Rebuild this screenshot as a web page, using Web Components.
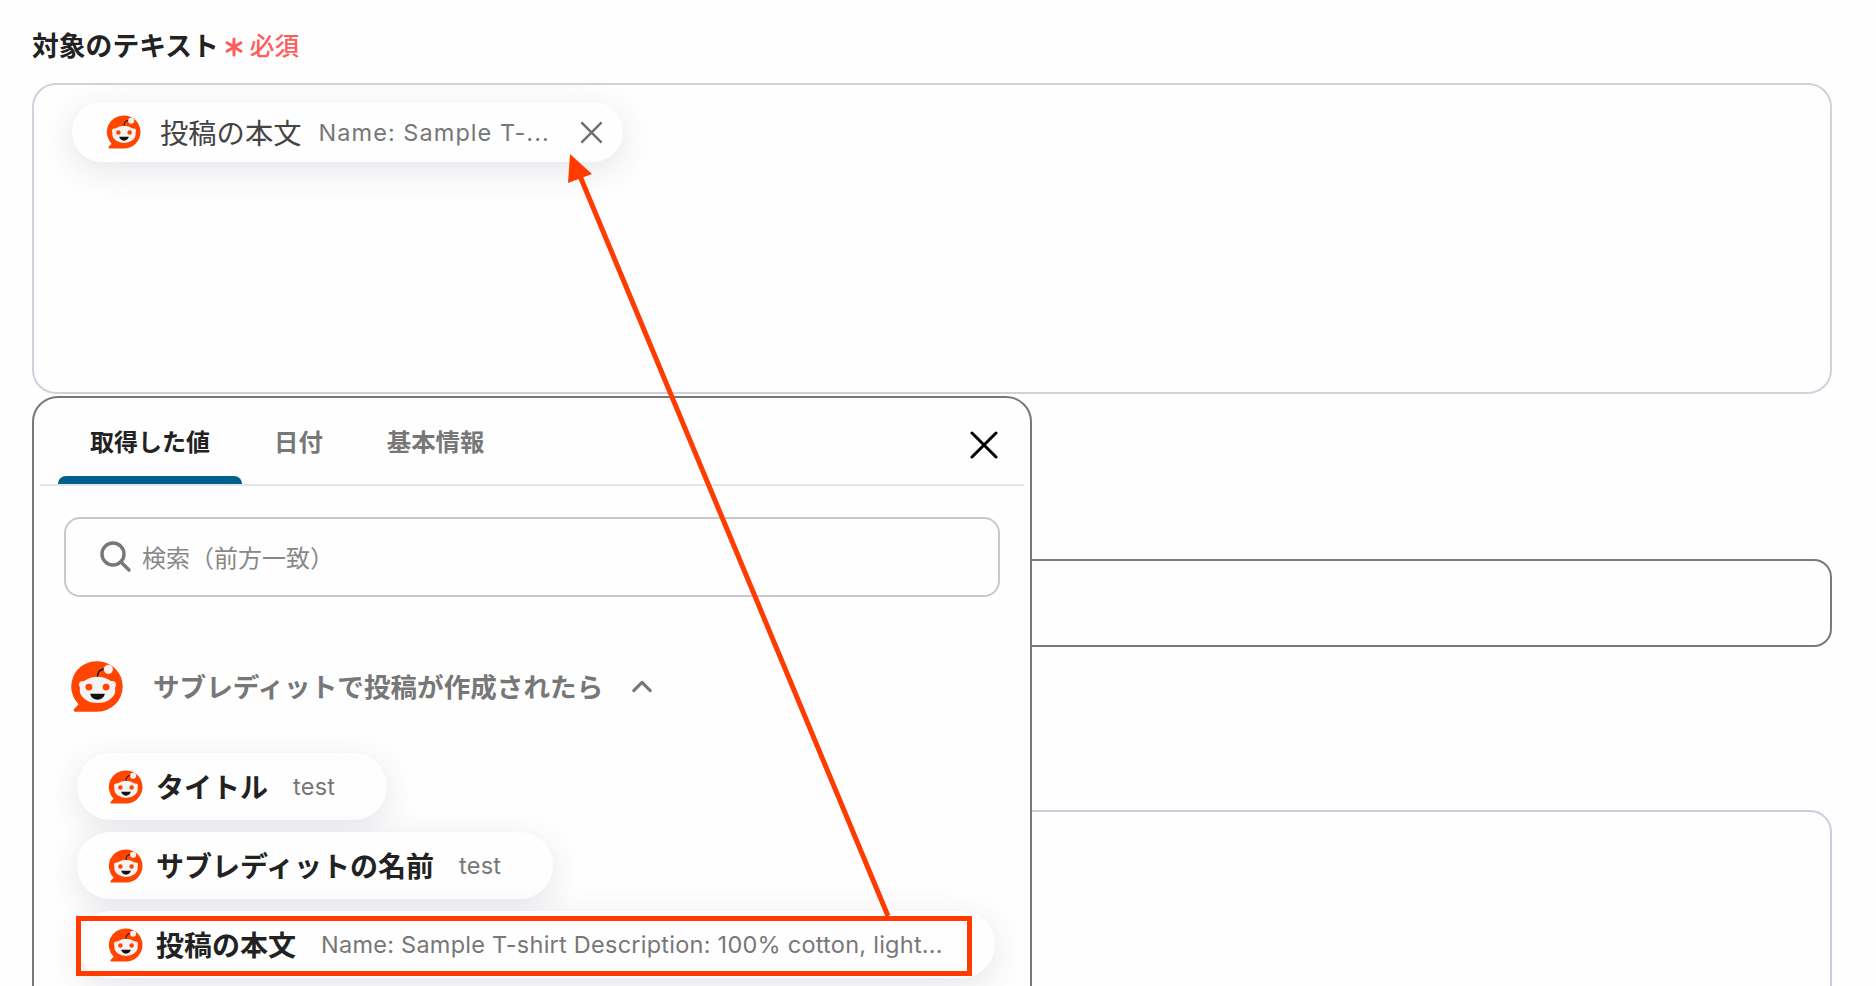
<!DOCTYPE html>
<html lang="ja">
<head>
<meta charset="utf-8">
<title>対象のテキスト</title>
<style>
  html, body { margin: 0; background: #fefefe; }
  body { font-family: 'Inter', 'Noto Sans CJK JP', sans-serif; }
</style>
</head>
<body>
<form-page>
  <field-label slot="label" required="必須">対象のテキスト</field-label>
  <field-box slot="first" height="311" radius="24" color="#cdd2dc">
    <token-chip name="投稿の本文" value="Name: Sample T-..." removable></token-chip>
  </field-box>
  <field-box slot="second" height="88" radius="18" color="#7a7a7a"></field-box>
  <field-box slot="third" height="400" radius="22" color="#c8cedc"></field-box>
  <picker-panel slot="panel">
    <token-chip name="タイトル" value="test" strong></token-chip>
    <token-chip name="サブレディットの名前" value="test" strong></token-chip>
    <token-chip name="投稿の本文" value="Name: Sample T-shirt Description: 100% cotton, light..." strong></token-chip>
  </picker-panel>
  <guide-overlay slot="overlay"></guide-overlay>
</form-page>

<script>
  // Icono de Reddit usado en los chips y en la cabecera del grupo
  class RedditIcon extends HTMLElement {
    constructor() {
      super();
      const size = this.getAttribute('size') || 36;
      this.attachShadow({ mode: 'open' }).innerHTML = `
        <style>
          :host { display: block; flex: none; width: ${size}px; height: ${size}px; }
          svg { display: block; width: 100%; height: 100%; }
        </style>
        <svg viewBox="0 0 48 48">
          <path fill="#ff4500" d="M24 2a22 22 0 0 1 0 44H4.6c-1.2 0-1.8-1.4-1-2.3l3.9-4.2A22 22 0 0 1 24 2z"/>
          <path fill="none" stroke="#1a1a1a" stroke-width="1.4" stroke-linecap="round" d="M24 15.5c0-4 2-6.4 6-6.8"/>
          <circle cx="33.5" cy="9" r="4" fill="#f4f1ef"/>
          <circle cx="11" cy="22.5" r="3.2" fill="#f4e9e4"/>
          <circle cx="37" cy="22.5" r="3.2" fill="#f4e9e4"/>
          <ellipse cx="24" cy="27" rx="15.5" ry="11.5" fill="#f6f3f2"/>
          <circle cx="16.5" cy="24.5" r="3" fill="#ff4500"/>
          <circle cx="31.5" cy="24.5" r="3" fill="#ff4500"/>
          <path fill="#111" d="M17.6 30.4h12.8c-.6 3-3.2 5.2-6.4 5.2s-5.8-2.2-6.4-5.2z"/>
        </svg>`;
    }
  }
  customElements.define('reddit-icon', RedditIcon);

  // Título del campo con la marca de obligatorio
  class FieldLabel extends HTMLElement {
    constructor() {
      super();
      const required = this.getAttribute('required');
      this.attachShadow({ mode: 'open' }).innerHTML = `
        <style>
          :host { display: flex; align-items: center; height: 38px; font-size: 26.8px; font-weight: 600; color: #222; }
          .req { display: flex; align-items: center; margin-left: 5px; color: #ff5c5c; font-size: 24.6px; font-weight: 500; }
          svg { width: 20px; height: 20px; margin: 6px 6px 0 0; }
        </style>
        <slot></slot>
        <span class="req">
          <svg viewBox="0 0 20 20" fill="none" stroke="#ff5c5c" stroke-width="3" stroke-linecap="round">
            <path d="M10 2v16M3 5.8l14 8.4M17 5.8L3 14.2"/>
          </svg>${required}
        </span>`;
    }
  }
  customElements.define('field-label', FieldLabel);

  // Caja de un campo del formulario
  class FieldBox extends HTMLElement {
    constructor() {
      super();
      const h = this.getAttribute('height');
      const r = this.getAttribute('radius');
      const c = this.getAttribute('color');
      this.attachShadow({ mode: 'open' }).innerHTML = `
        <style>
          :host {
            display: block; box-sizing: border-box; height: ${h}px; padding: 17px 38px;
            border: 2px solid ${c}; border-radius: ${r}px; background: #fefefe;
          }
        </style>
        <slot></slot>`;
    }
  }
  customElements.define('field-box', FieldBox);

  // Chip con el icono, el nombre del valor y su contenido
  class TokenChip extends HTMLElement {
    constructor() {
      super();
      const strong = this.hasAttribute('strong');
      const removable = this.hasAttribute('removable');
      this.attachShadow({ mode: 'open' }).innerHTML = `
        <style>
          :host {
            display: flex; align-items: center; box-sizing: border-box; width: max-content;
            height: ${strong ? 67 : 60}px; padding: 0 ${removable ? 20 : 52}px 0 ${strong ? 31 : 34}px;
            border-radius: 34px; background: #fefefe; box-shadow: 0 8px 32px rgba(60, 60, 90, .12);
          }
          .name {
            margin: 0 0 2px ${strong ? 12 : 18}px; font-size: ${strong ? 28 : 28.3}px; white-space: nowrap;
            font-weight: ${strong ? 700 : 400}; color: ${strong ? '#222' : '#444'};
          }
          .value {
            margin-left: ${strong ? 25 : 17}px; font-size: 23.5px; white-space: nowrap; color: #777;
            letter-spacing: ${strong ? .25 : 1.05}px;
          }
          svg { width: 23px; height: 23px; margin-left: 30px; }
        </style>
        <reddit-icon size="36"></reddit-icon>
        <span class="name">${this.getAttribute('name')}</span>
        <span class="value">${this.getAttribute('value')}</span>
        ${removable ? `<svg viewBox="0 0 24 24" fill="none" stroke="#6f6f6f" stroke-width="2.6"><path d="M1.5 1.5l21 21M22.5 1.5l-21 21"/></svg>` : ''}`;
    }
  }
  customElements.define('token-chip', TokenChip);

  // Panel desplegable con las pestañas, el buscador y los valores
  class PickerPanel extends HTMLElement {
    constructor() {
      super();
      this.attachShadow({ mode: 'open' }).innerHTML = `
        <style>
          :host {
            display: block; box-sizing: border-box; width: 1000px; height: 640px; padding: 0 6px;
            border: 2px solid #777; border-radius: 26px; background: #fefefe;
          }
          .tabs {
            display: flex; align-items: flex-end; justify-content: space-between; height: 86px;
            border-bottom: 2px solid #e4e4e8;
          }
          .tab-list { display: flex; height: 100%; margin-left: 18px; }
          .tab {
            position: relative; display: flex; align-items: center; box-sizing: border-box; height: 100%;
            padding: 0 32px 2px; font-size: 24.4px; font-weight: 600; color: #777;
          }
          .tab.on { color: #222; font-size: 24px; }
          .tab.on::after {
            content: ''; position: absolute; left: 0; right: 0; bottom: 0; height: 8px;
            background: #00628a; border-radius: 8px 8px 0 0;
          }
          .close { width: 28px; height: 28px; margin: 0 26px 25px 0; align-self: flex-end; }
          .search {
            display: flex; align-items: center; box-sizing: border-box; height: 80px;
            margin: 31px 24px 0 24px; padding: 0 0 2px 32px; border: 2px solid #c8c8cc; border-radius: 16px;
            font-size: 24px; color: #888;
          }
          .search svg { width: 34px; height: 34px; margin-right: 10px; }
          .group { display: flex; align-items: center; height: 54px; margin: 62px 0 0 30px; }
          .group-name { margin: 0 0 2px 28px; font-size: 26.6px; font-weight: 600; color: #777; white-space: nowrap; }
          .group svg { width: 22px; height: 14px; margin-left: 28px; }
          .items { display: flex; flex-direction: column; gap: 12px; margin: 40px 0 0 37px; }
        </style>
        <div class="tabs">
          <div class="tab-list">
            <div class="tab on">取得した値</div>
            <div class="tab">日付</div>
            <div class="tab">基本情報</div>
          </div>
          <svg class="close" viewBox="0 0 28 28" fill="none" stroke="#000" stroke-width="3" stroke-linecap="round"><path d="M2 2l24 24M26 2L2 26"/></svg>
        </div>
        <div class="search">
          <svg viewBox="0 0 34 34" fill="none" stroke="#777" stroke-width="3.4"><circle cx="15" cy="15" r="11"/><path stroke-linecap="round" d="M23 23l8 8"/></svg>
          検索（前方一致）
        </div>
        <div class="group">
          <reddit-icon size="55"></reddit-icon>
          <span class="group-name">サブレディットで投稿が作成されたら</span>
          <svg viewBox="0 0 24 14" fill="none" stroke="#777" stroke-width="3.4" stroke-linecap="round" stroke-linejoin="round"><path d="M3 12l9-9 9 9"/></svg>
        </div>
        <div class="items"><slot></slot></div>`;
    }
  }
  customElements.define('picker-panel', PickerPanel);

  // Anotaciones rojas: marco del valor y flecha hacia el chip
  class GuideOverlay extends HTMLElement {
    constructor() {
      super();
      this.attachShadow({ mode: 'open' }).innerHTML = `
        <style>
          :host { display: block; position: absolute; inset: 0; pointer-events: none; }
          svg { display: block; width: 100%; height: 100%; }
        </style>
        <svg viewBox="0 0 1876 986">
          <rect x="78.5" y="918.5" width="891" height="55" fill="none" stroke="#ff3b00" stroke-width="5"/>
          <path d="M888 916L580 176" stroke="#ff3b00" stroke-width="5" fill="none"/>
          <path d="M570 154l22 20-24 9z" fill="#ff3b00"/>
        </svg>`;
    }
  }
  customElements.define('guide-overlay', GuideOverlay);

  // Página: formulario en flujo con el panel y las anotaciones encima
  class FormPage extends HTMLElement {
    constructor() {
      super();
      this.attachShadow({ mode: 'open' }).innerHTML = `
        <style>
          :host {
            display: block; position: relative; box-sizing: border-box; width: 1876px; height: 986px;
            padding: 25px 44px 0 32px; overflow: hidden;
          }
          .gap-label { height: 20px; }
          .gap-second { height: 165px; }
          .gap-third { height: 163px; }
          .panel { position: absolute; left: 32px; top: 396px; }
        </style>
        <slot name="label"></slot>
        <div class="gap-label"></div>
        <slot name="first"></slot>
        <div class="gap-second"></div>
        <slot name="second"></slot>
        <div class="gap-third"></div>
        <slot name="third"></slot>
        <div class="panel"><slot name="panel"></slot></div>
        <slot name="overlay"></slot>`;
    }
  }
  customElements.define('form-page', FormPage);
</script>
</body>
</html>
